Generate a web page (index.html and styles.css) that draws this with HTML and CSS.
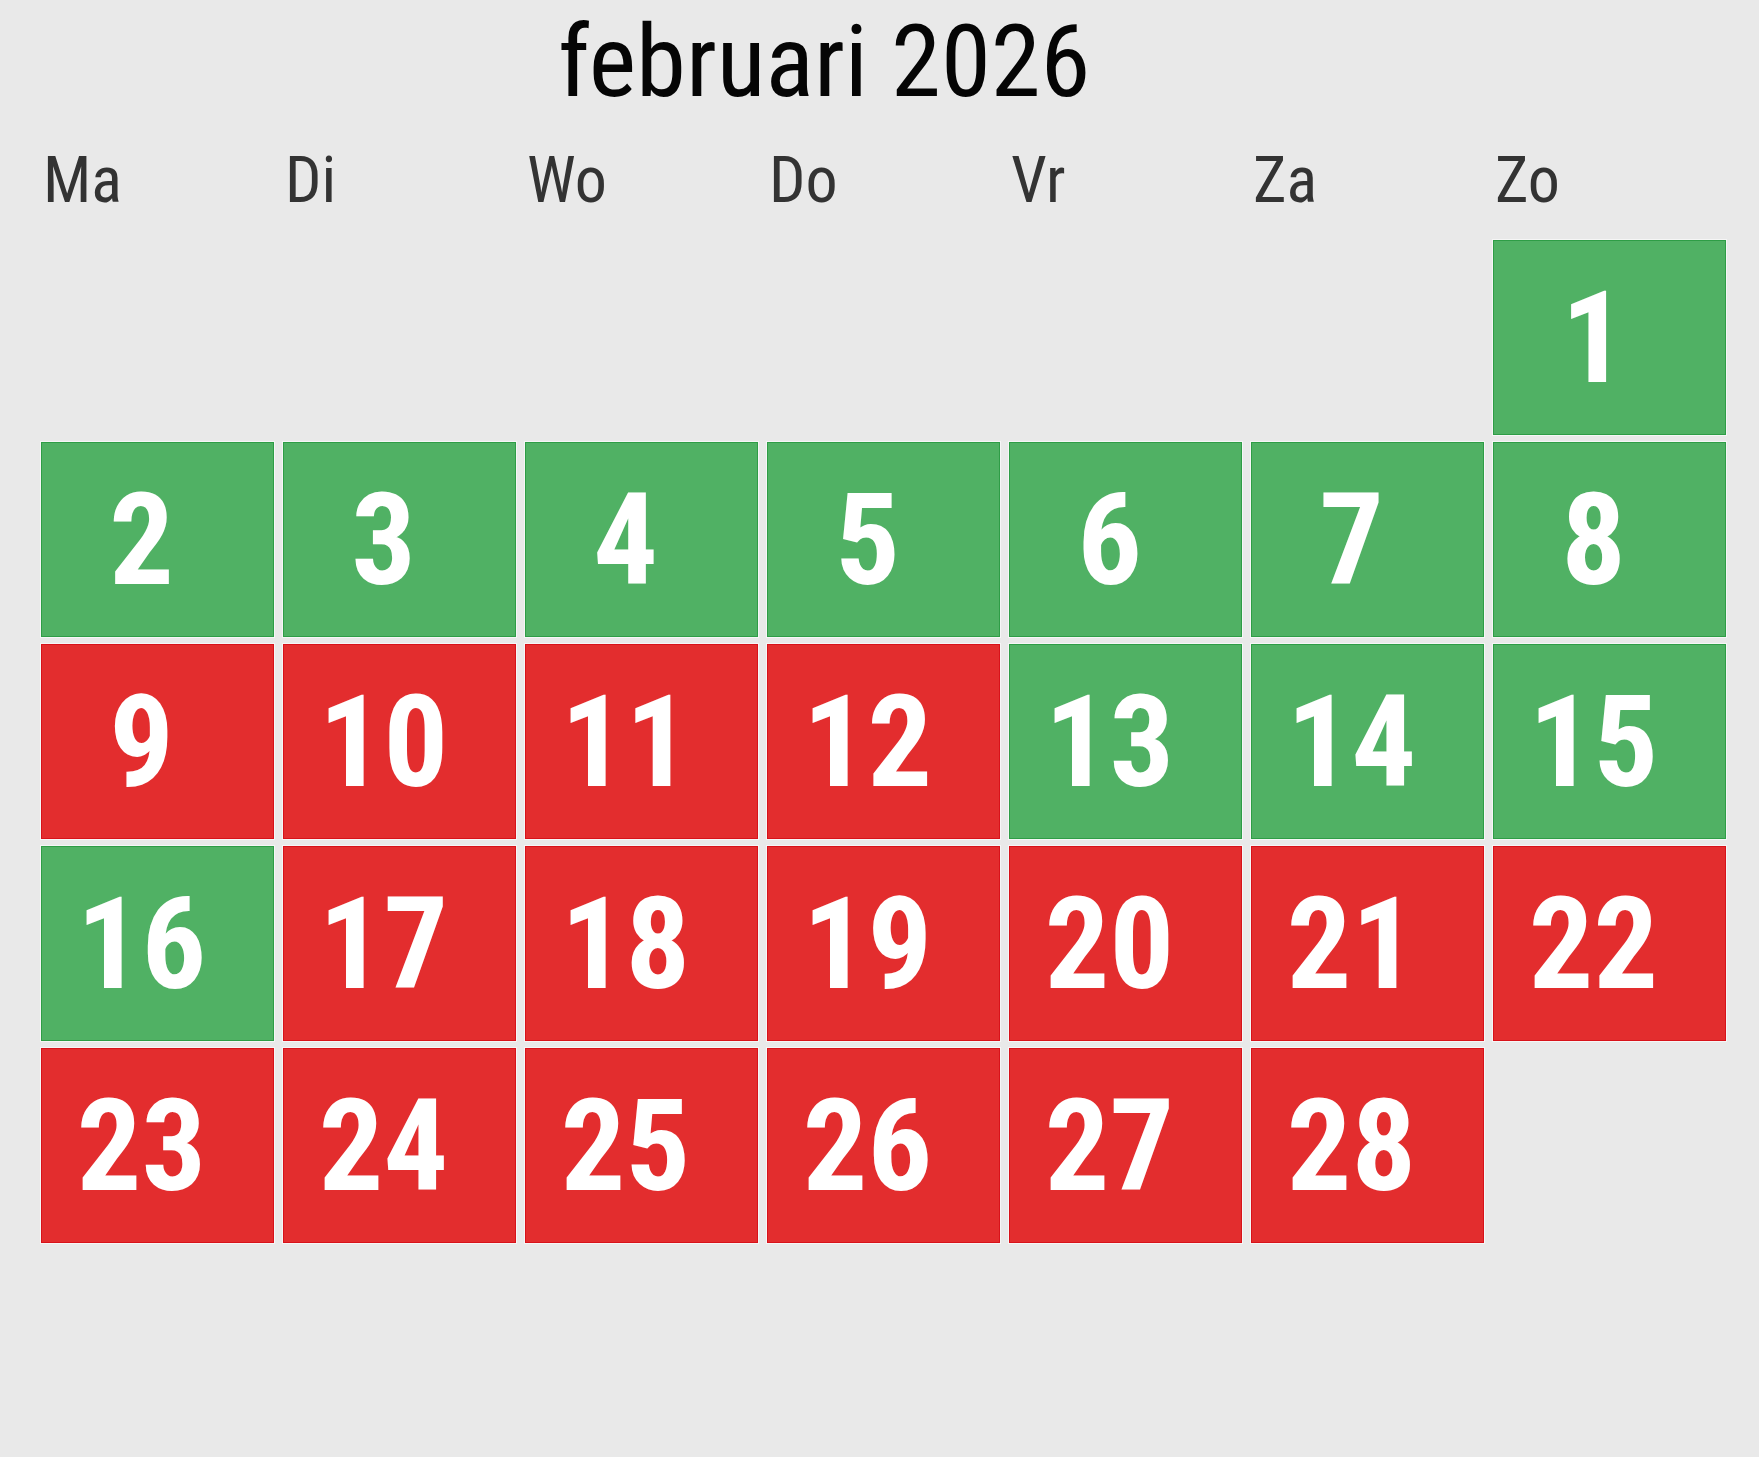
FILE: index.html
```html
<!DOCTYPE html>
<html lang="nl">
<head>
<meta charset="utf-8">
<title>februari 2026</title>
<link rel="stylesheet" href="styles.css">
</head>
<body>
<main class="cal">
  <h1 class="cal-title">februari 2026</h1>
  <div class="cal-head">
    <div class="wd">Ma</div><div class="wd">Di</div><div class="wd">Wo</div><div class="wd">Do</div><div class="wd">Vr</div><div class="wd">Za</div><div class="wd">Zo</div>
  </div>
  <div class="cal-grid">
    <div class="day ok first"><span>1</span></div>
    <div class="day ok"><span>2</span></div>
    <div class="day ok"><span>3</span></div>
    <div class="day ok"><span>4</span></div>
    <div class="day ok"><span>5</span></div>
    <div class="day ok"><span>6</span></div>
    <div class="day ok"><span>7</span></div>
    <div class="day ok"><span>8</span></div>
    <div class="day bad"><span>9</span></div>
    <div class="day bad"><span>10</span></div>
    <div class="day bad"><span>11</span></div>
    <div class="day bad"><span>12</span></div>
    <div class="day ok"><span>13</span></div>
    <div class="day ok"><span>14</span></div>
    <div class="day ok"><span>15</span></div>
    <div class="day ok"><span>16</span></div>
    <div class="day bad"><span>17</span></div>
    <div class="day bad"><span>18</span></div>
    <div class="day bad"><span>19</span></div>
    <div class="day bad"><span>20</span></div>
    <div class="day bad"><span>21</span></div>
    <div class="day bad"><span>22</span></div>
    <div class="day bad"><span>23</span></div>
    <div class="day bad"><span>24</span></div>
    <div class="day bad"><span>25</span></div>
    <div class="day bad"><span>26</span></div>
    <div class="day bad"><span>27</span></div>
    <div class="day bad"><span>28</span></div>
  </div>
</main>
</body>
</html>
```
FILE: styles.css
```css
html, body {
  margin: 0;
  padding: 0;
  background: #e9e9e9;
}
body {
  font-family: Roboto, "Noto Sans", sans-serif;
  width: 1759px;
  height: 1457px;
}
.cal {
  padding: 3px 0 0 41px;
  width: 1685px;
}
.cal-title {
  margin: 0;
  padding-left: 517px;
  font-size: 101px;
  font-weight: 400;
  line-height: 1.17;
  color: #050505;
  font-stretch: 85%;
}
.cal-head {
  display: grid;
  grid-template-columns: repeat(7, 233px);
  column-gap: 9px;
  margin-top: 23px;
}
.wd {
  font-size: 64px;
  line-height: 1.17;
  color: #333333;
  padding-left: 2px;
  font-stretch: 85%;
}
.cal-grid {
  display: grid;
  grid-template-columns: repeat(7, 233px);
  grid-auto-rows: 195px;
  column-gap: 9px;
  row-gap: 7px;
  margin-top: 21px;
}
.day {
  box-sizing: border-box;
  display: flex;
  align-items: center;
  justify-content: center;
  padding-right: 32px;
  box-shadow: 0 0 0 1px #f6f6f6;
}
.day span {
  color: #ffffff;
  font-size: 128px;
  font-weight: 700;
  line-height: 1;
  font-stretch: 85%;
}
.first {
  grid-column-start: 7;
}
.ok {
  background: #50b164;
  border: 1px solid #2e9d46;
}
.bad {
  background: #e32d2e;
  border: 1px solid #d8121a;
}
```
